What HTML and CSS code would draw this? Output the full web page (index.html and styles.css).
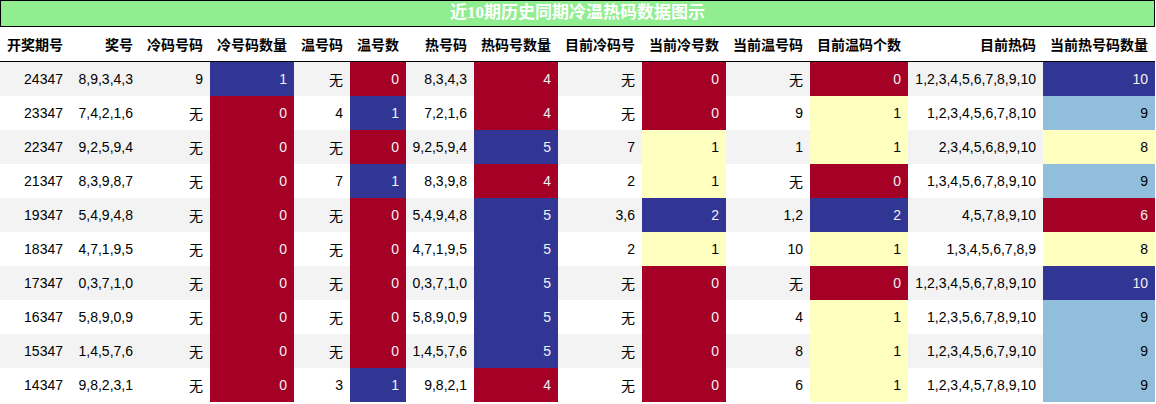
FILE: index.html
```html
<!DOCTYPE html>
<html lang="zh">
<head>
<meta charset="utf-8">
<link rel="stylesheet" href="styles.css">
</head>
<body>
<div class="title">近10期历史同期冷温热码数据图示</div>
<table class="grid">
<colgroup>
<col class="w70"><col class="w70"><col class="w70"><col class="w84"><col class="w56"><col class="w56"><col class="w68"><col class="w84"><col class="w84"><col class="w84"><col class="w84"><col class="w98"><col class="w135"><col class="w112">
</colgroup>
<thead>
<tr><th>开奖期号</th><th>奖号</th><th>冷码号码</th><th>冷号码数量</th><th>温号码</th><th>温号数</th><th>热号码</th><th>热码号数量</th><th>目前冷码号</th><th>当前冷号数</th><th>当前温号码</th><th>目前温码个数</th><th>目前热码</th><th>当前热号码数量</th></tr>
</thead>
<tbody>
<tr><td>24347</td><td>8,9,3,4,3</td><td>9</td><td class="blue">1</td><td>无</td><td class="red">0</td><td>8,3,4,3</td><td class="red">4</td><td>无</td><td class="red">0</td><td>无</td><td class="red">0</td><td>1,2,3,4,5,6,7,8,9,10</td><td class="blue">10</td></tr>
<tr><td>23347</td><td>7,4,2,1,6</td><td>无</td><td class="red">0</td><td>4</td><td class="blue">1</td><td>7,2,1,6</td><td class="red">4</td><td>无</td><td class="red">0</td><td>9</td><td class="yellow">1</td><td>1,2,3,4,5,6,7,8,10</td><td class="lblue">9</td></tr>
<tr><td>22347</td><td>9,2,5,9,4</td><td>无</td><td class="red">0</td><td>无</td><td class="red">0</td><td>9,2,5,9,4</td><td class="blue">5</td><td>7</td><td class="yellow">1</td><td>1</td><td class="yellow">1</td><td>2,3,4,5,6,8,9,10</td><td class="yellow">8</td></tr>
<tr><td>21347</td><td>8,3,9,8,7</td><td>无</td><td class="red">0</td><td>7</td><td class="blue">1</td><td>8,3,9,8</td><td class="red">4</td><td>2</td><td class="yellow">1</td><td>无</td><td class="red">0</td><td>1,3,4,5,6,7,8,9,10</td><td class="lblue">9</td></tr>
<tr><td>19347</td><td>5,4,9,4,8</td><td>无</td><td class="red">0</td><td>无</td><td class="red">0</td><td>5,4,9,4,8</td><td class="blue">5</td><td>3,6</td><td class="blue">2</td><td>1,2</td><td class="blue">2</td><td>4,5,7,8,9,10</td><td class="red">6</td></tr>
<tr><td>18347</td><td>4,7,1,9,5</td><td>无</td><td class="red">0</td><td>无</td><td class="red">0</td><td>4,7,1,9,5</td><td class="blue">5</td><td>2</td><td class="yellow">1</td><td>10</td><td class="yellow">1</td><td>1,3,4,5,6,7,8,9</td><td class="yellow">8</td></tr>
<tr><td>17347</td><td>0,3,7,1,0</td><td>无</td><td class="red">0</td><td>无</td><td class="red">0</td><td>0,3,7,1,0</td><td class="blue">5</td><td>无</td><td class="red">0</td><td>无</td><td class="red">0</td><td>1,2,3,4,5,6,7,8,9,10</td><td class="blue">10</td></tr>
<tr><td>16347</td><td>5,8,9,0,9</td><td>无</td><td class="red">0</td><td>无</td><td class="red">0</td><td>5,8,9,0,9</td><td class="blue">5</td><td>无</td><td class="red">0</td><td>4</td><td class="yellow">1</td><td>1,2,3,5,6,7,8,9,10</td><td class="lblue">9</td></tr>
<tr><td>15347</td><td>1,4,5,7,6</td><td>无</td><td class="red">0</td><td>无</td><td class="red">0</td><td>1,4,5,7,6</td><td class="blue">5</td><td>无</td><td class="red">0</td><td>8</td><td class="yellow">1</td><td>1,2,3,4,5,6,7,9,10</td><td class="lblue">9</td></tr>
<tr><td>14347</td><td>9,8,2,3,1</td><td>无</td><td class="red">0</td><td>3</td><td class="blue">1</td><td>9,8,2,1</td><td class="red">4</td><td>无</td><td class="red">0</td><td>6</td><td class="yellow">1</td><td>1,2,3,4,5,7,8,9,10</td><td class="lblue">9</td></tr>
</tbody>
</table>
</body>
</html>
```

FILE: styles.css
```css
html, body {
  margin: 0;
  padding: 0;
  background: #ffffff;
}
body {
  font-family: "Liberation Sans", Arial, "Noto Sans CJK SC", sans-serif;
  font-size: 14px;
  color: #000000;
}
.title {
  box-sizing: border-box;
  width: 1155px;
  height: 27px;
  border: 1px solid #000000;
  background: #90ee90;
  color: #ffffff;
  font-family: "Liberation Serif", "Noto Sans CJK SC", serif;
  font-weight: bold;
  font-size: 17px;
  line-height: 24px;
  text-align: center;
}
.grid {
  border-collapse: collapse;
  table-layout: fixed;
  width: 1155px;
}
.w56 { width: 56px; }
.w68 { width: 68px; }
.w70 { width: 70px; }
.w84 { width: 84px; }
.w98 { width: 98px; }
.w112 { width: 112px; }
.w135 { width: 135px; }
.grid th {
  height: 34px;
  padding: 0 7px 0 0;
  text-align: right;
  font-weight: bold;
  border-bottom: 1px solid #000000;
  white-space: nowrap;
  vertical-align: middle;
}
.grid td {
  height: 34px;
  padding: 0 7px 0 0;
  text-align: right;
  white-space: nowrap;
  vertical-align: middle;
}
.grid tbody tr:nth-child(odd) td {
  background: #f3f3f3;
}
.grid tbody tr td.red { background: #a50026; color: #f1f1f1; }
.grid tbody tr td.blue { background: #313695; color: #f1f1f1; }
.grid tbody tr td.yellow { background: #ffffbf; color: #000000; }
.grid tbody tr td.lblue { background: #91bfdb; color: #000000; }
```
